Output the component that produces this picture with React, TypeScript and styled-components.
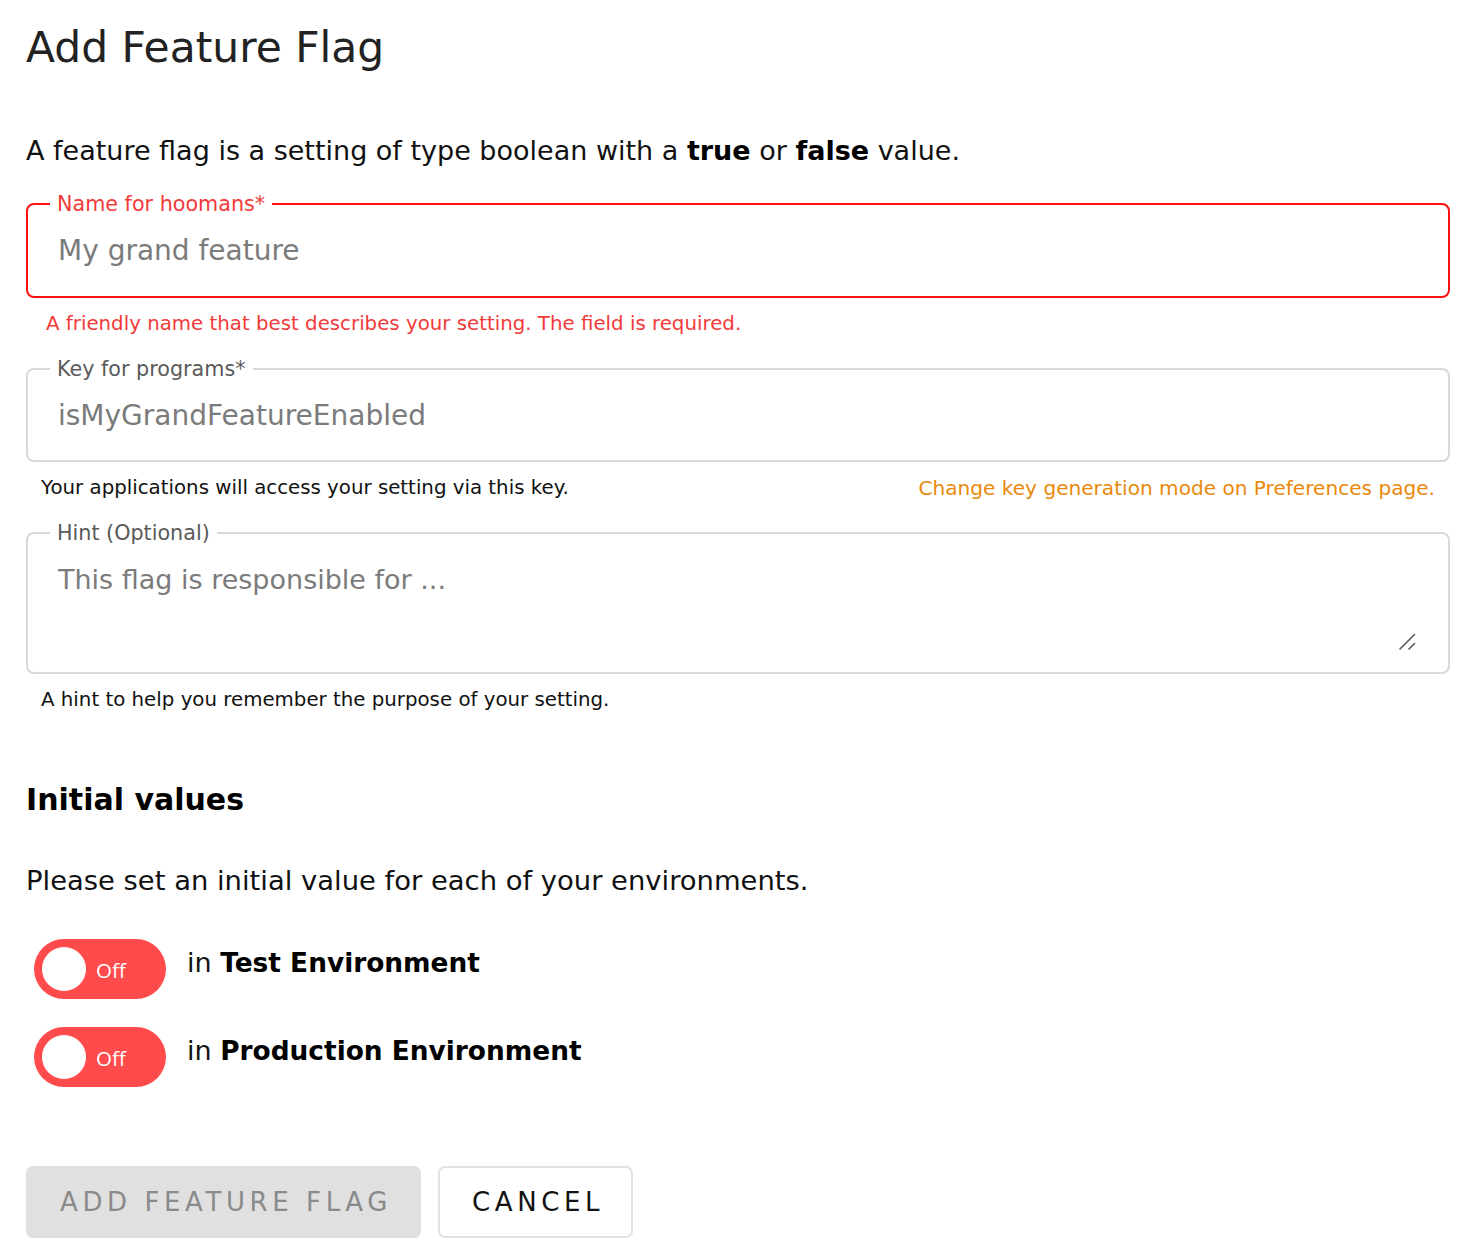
import React from "react";
import styled, { createGlobalStyle } from "styled-components";

const GlobalStyle = createGlobalStyle`
  html, body { margin: 0; padding: 0; background: #ffffff; }
  body { font-family: "DejaVu Sans", "Noto Sans", sans-serif; color: #111; }
  * { box-sizing: border-box; }
`;

const Page = styled.div`
  display: flex;
  flex-direction: column;
  padding: 23px 24px 20px 26px;
`;

const Title = styled.h1`
  margin: 0;
  font-size: 42.4px;
  line-height: 50px;
  font-weight: 400;
  color: #222;
`;

const Lead = styled.p`
  margin: 60px 0 0;
  font-size: 27px;
  line-height: 36px;
  color: #111;
  b { font-weight: 700; color: #000; }
`;

const Field = styled.div<{ $error?: boolean; $mt: number; $h: number }>`
  position: relative;
  margin-top: ${(p) => p.$mt}px;
  height: ${(p) => p.$h}px;
  border: 2px solid ${(p) => (p.$error ? "#ff1010" : "#d9d9d9")};
  border-radius: 8px;
  display: flex;
`;

const FieldLabel = styled.label<{ $error?: boolean }>`
  position: absolute;
  top: -13px;
  left: 22px;
  padding: 0 7px;
  background: #fff;
  font-size: 20.7px;
  line-height: 24px;
  color: ${(p) => (p.$error ? "#f23a3a" : "#5a5a5a")};
`;

const TextInput = styled.input`
  flex: 1;
  border: none;
  outline: none;
  background: transparent;
  padding: 0 30px;
  font-family: inherit;
  font-size: 28px;
  color: #333;
  &::placeholder { color: #7b7b7b; opacity: 1; }
`;

const AreaWrap = styled.div`
  flex: 1;
  display: flex;
  padding: 29px 30px 20px 30px;
`;

const TextArea = styled.textarea`
  flex: 1;
  border: none;
  outline: none;
  background: transparent;
  padding: 0;
  font-family: inherit;
  font-size: 27px;
  line-height: 34px;
  color: #333;
  resize: none;
  &::placeholder { color: #7b7b7b; opacity: 1; }
`;

const ResizeGrip = styled.svg`
  position: absolute;
  right: 32px;
  bottom: 22px;
  width: 17px;
  height: 17px;
  pointer-events: none;
`;

const HelperRow = styled.div`
  margin-top: 14px;
  display: flex;
  justify-content: space-between;
  padding: 0 15px;
`;

const Helper = styled.span<{ $tone?: "error" | "link" | "plain"; $indent?: number }>`
  font-size: ${(p) => (p.$tone === "link" ? 20.1 : 19.8)}px;
  line-height: 24px;
  padding-left: ${(p) => p.$indent ?? 0}px;
  color: ${(p) =>
    p.$tone === "error" ? "#f23a3a" : p.$tone === "link" ? "#e8890c" : "#111"};
  cursor: ${(p) => (p.$tone === "link" ? "pointer" : "default")};
`;

const SectionTitle = styled.h2`
  margin: 70px 0 0;
  font-size: 30px;
  line-height: 36px;
  font-weight: 700;
  color: #000;
`;

const Paragraph = styled.p`
  margin: 45px 0 0;
  font-size: 27.4px;
  line-height: 36px;
  color: #111;
`;

const EnvList = styled.div`
  margin-top: 40px;
  display: flex;
  flex-direction: column;
  gap: 28px;
  padding-left: 8px;
`;

const EnvRow = styled.div`
  display: flex;
  align-items: flex-start;
  gap: 21px;
`;

const Toggle = styled.button`
  width: 132px;
  height: 60px;
  border: none;
  border-radius: 30px;
  background: #ff4b4b;
  display: flex;
  align-items: center;
  gap: 10px;
  padding: 0 8px;
  cursor: pointer;
`;

const Knob = styled.span`
  width: 44px;
  height: 44px;
  border-radius: 50%;
  background: #fff;
  flex: none;
`;

const ToggleText = styled.span`
  font-family: "Open Sans", "Noto Sans", sans-serif;
  font-size: 20.5px;
  color: #fff;
  margin-top: 2px;
`;

const EnvLabel = styled.span`
  margin-top: 6px;
  font-size: 27px;
  line-height: 36px;
  color: #111;
  b { font-weight: 700; font-size: 26.4px; color: #000; }
`;

const Actions = styled.div`
  margin-top: 79px;
  display: flex;
  gap: 17px;
`;

const Button = styled.button<{ $variant: "disabled" | "outline" }>`
  height: 72px;
  padding: 0 27px 0 32px;
  border-radius: 7px;
  font-family: inherit;
  font-size: 26px;
  letter-spacing: 4.6px;
  border: 2px solid ${(p) => (p.$variant === "disabled" ? "#e0e0e0" : "#e2e2e2")};
  background: ${(p) => (p.$variant === "disabled" ? "#e0e0e0" : "#fff")};
  color: ${(p) => (p.$variant === "disabled" ? "#8a8a8a" : "#111")};
  cursor: ${(p) => (p.$variant === "disabled" ? "default" : "pointer")};
`;

const envs = ["Test Environment", "Production Environment"];

export default function App() {
  return (
    <>
      <GlobalStyle />
      <Page>
        <Title>Add Feature Flag</Title>
        <Lead>
          A feature flag is a setting of type boolean with a <b>true</b> or <b>false</b> value.
        </Lead>

        <Field $error $mt={34} $h={95}>
          <FieldLabel $error>Name for hoomans*</FieldLabel>
          <TextInput placeholder="My grand feature" />
        </Field>
        <HelperRow>
          <Helper $tone="error" $indent={5}>
            A friendly name that best describes your setting. The field is required.
          </Helper>
        </HelperRow>

        <Field $mt={32} $h={94}>
          <FieldLabel>Key for programs*</FieldLabel>
          <TextInput placeholder="isMyGrandFeatureEnabled" />
        </Field>
        <HelperRow>
          <Helper>Your applications will access your setting via this key.</Helper>
          <Helper $tone="link">Change key generation mode on Preferences page.</Helper>
        </HelperRow>

        <Field $mt={32} $h={142}>
          <FieldLabel>Hint (Optional)</FieldLabel>
          <AreaWrap>
            <TextArea placeholder="This flag is responsible for ..." />
          </AreaWrap>
          <ResizeGrip viewBox="0 0 17 17">
            <path d="M1 16 L15.5 1.5 M10 16 L15.5 10.5" stroke="#5a5a5a" strokeWidth="1.6" strokeLinecap="round" fill="none" />
          </ResizeGrip>
        </Field>
        <HelperRow>
          <Helper>A hint to help you remember the purpose of your setting.</Helper>
        </HelperRow>

        <SectionTitle>Initial values</SectionTitle>
        <Paragraph>Please set an initial value for each of your environments.</Paragraph>

        <EnvList>
          {envs.map((env) => (
            <EnvRow key={env}>
              <Toggle type="button">
                <Knob />
                <ToggleText>Off</ToggleText>
              </Toggle>
              <EnvLabel>
                in <b>{env}</b>
              </EnvLabel>
            </EnvRow>
          ))}
        </EnvList>

        <Actions>
          <Button $variant="disabled" disabled>
            ADD FEATURE FLAG
          </Button>
          <Button $variant="outline">CANCEL</Button>
        </Actions>
      </Page>
    </>
  );
}
